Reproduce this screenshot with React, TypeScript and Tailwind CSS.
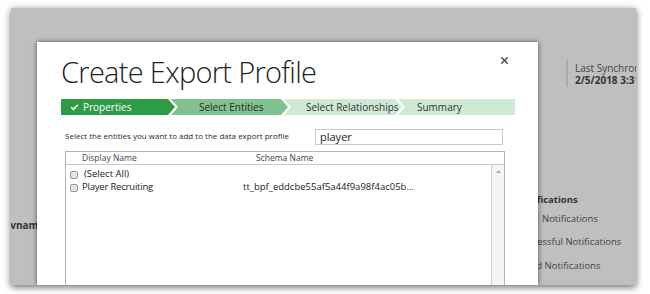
import React from 'react';
import { Check, X } from 'lucide-react';

const steps = [
  { label: 'Properties', w: 'w-[114px]', bg: 'bg-[#2e9b45]', text: 'text-white', first: true, last: false, pl: 'pl-[20px]' },
  { label: 'Select Entities', w: 'w-[117px]', bg: 'bg-[#80c18e]', text: 'text-[#2b2b2b]', first: false, last: false, pl: 'pl-[28px]' },
  { label: 'Select Relationships', w: 'w-[118px]', bg: 'bg-[#cfe9d4]', text: 'text-[#333]', first: false, last: false, pl: 'pl-[22px]' },
  { label: 'Summary', w: 'w-[117px]', bg: 'bg-[#cfe9d4]', text: 'text-[#333]', first: false, last: true, pl: 'pl-[19px]' },
];

const clipFor = (first: boolean, last: boolean) => {
  if (first) return '[clip-path:polygon(0_0,calc(100%_-_7px)_0,100%_50%,calc(100%_-_7px)_100%,0_100%)]';
  if (last) return '[clip-path:polygon(0_0,100%_0,100%_100%,0_100%,7px_50%)]';
  return '[clip-path:polygon(0_0,calc(100%_-_7px)_0,100%_50%,calc(100%_-_7px)_100%,0_100%,7px_50%)]';
};

const App: React.FC = () => {
  return (
    <div className="w-[650px] h-[294px] bg-white pt-[8px] pl-[11px] overflow-hidden font-['Open_Sans',sans-serif]">
      <div className="w-[625px] h-[277px] bg-[#bfbfbf] shadow-[0_2px_7px_rgba(0,0,0,0.6)] flex overflow-hidden">
        {/* page behind the overlay, left edge */}
        <div className="w-[26px] shrink-0 overflow-hidden pt-[210px]">
          <div className="text-[10px] font-bold text-[#333] whitespace-nowrap -ml-[14px]">Devname</div>
        </div>

        {/* Modal */}
        <div className="w-[501px] shrink-0 mt-[34px] bg-white relative z-10 shadow-[0_0_5px_rgba(0,0,0,0.6)]">
          <div className="flex justify-between items-start pl-[24px] pr-[28px] pt-[10px]">
            <h1 className="text-[29px] font-light text-[#222] leading-[40px] tracking-[-0.7px]">Create Export Profile</h1>
            <X className="w-[11px] h-[11px] text-[#555] mt-[3px]" strokeWidth={3.5} />
          </div>

          {/* Stepper */}
          <div className="flex pl-[24px] mt-[7px] h-[16px]">
            {steps.map((s, i) => (
              <div
                key={s.label}
                className={`${s.w} ${s.bg} ${s.text} ${s.pl} ${clipFor(s.first, s.last)} ${i > 0 ? '-ml-[4px]' : ''} h-[16px] flex items-center text-[10px] whitespace-nowrap`}
              >
                {s.first && <Check className="w-[9px] h-[9px] mr-[4px] -ml-[11px]" strokeWidth={4} />}
                {s.label}
              </div>
            ))}
          </div>

          {/* Filter row */}
          <div className="flex items-center justify-between pl-[28px] pr-[35px] mt-[12px]">
            <span className="text-[8px] text-[#2a2a2a]">Select the entities you want to add to the data export profile</span>
            <div className="w-[188px] h-[16px] mt-[2px] border border-[#c8c8c8] px-[4px] flex items-center text-[11px] text-[#222]">player</div>
          </div>

          {/* Entity table */}
          <div className="ml-[28px] mr-[33px] mt-[6px] h-[140px] border border-[#b4b4b4] flex flex-col">
            <div className="h-[13px] border-b border-[#c8c8c8] flex items-center text-[8.5px] text-[#444]">
              <span className="pl-[16px] w-[190px]">Display Name</span>
              <span>Schema Name</span>
            </div>
            <div className="flex flex-1">
              <div className="flex-1 pt-[3px] pl-[4px] text-[9.5px] text-[#222]">
                <div className="flex items-center h-[13px]">
                  <span className="w-[8px] h-[8px] rounded-[2px] border border-[#9a9a9a] bg-[#e4e4e4]" />
                  <span className="ml-[6px]">(Select All)</span>
                </div>
                <div className="flex items-center h-[13px]">
                  <span className="w-[8px] h-[8px] rounded-[2px] border border-[#9a9a9a] bg-[#e4e4e4]" />
                  <span className="ml-[4px] w-[161px] tracking-[-0.2px]">Player Recruiting</span>
                  <span>tt_bpf_eddcbe55af5a44f9a98f4ac05b...</span>
                </div>
              </div>
              <div className="w-[13px] border-l border-[#d0d0d0] bg-[#f5f5f5] flex justify-center pt-[5px]">
                <svg width="5" height="3" viewBox="0 0 5 3"><path d="M0 3 L2.5 0 L5 3 Z" fill="#a8a8a8" /></svg>
              </div>
            </div>
          </div>
        </div>

        {/* page behind the overlay, right side */}
        <div className="flex-1 overflow-hidden text-[#444] whitespace-nowrap">
          <div className="mt-[52px] ml-[28px] border-l-2 border-[#a9a9a9] pl-[7px] h-[27px] flex flex-col justify-center leading-[12px]">
            <span className="text-[10px]">Last Synchronized</span>
            <span className="text-[10px] font-bold text-[#333]">2/5/2018 3:31 PM</span>
          </div>
          <div className="mt-[104px] text-[9.5px]">
            <div className="font-bold text-[#333] -ml-[22px] leading-[18px]">Notifications</div>
            <div className="ml-[4px] leading-[20px]">Notifications</div>
            <div className="-ml-[21px] leading-[26px]">Successful Notifications</div>
            <div className="-ml-[22px] leading-[22px]">Failed Notifications</div>
          </div>
        </div>
      </div>
    </div>
  );
};

export default App;
